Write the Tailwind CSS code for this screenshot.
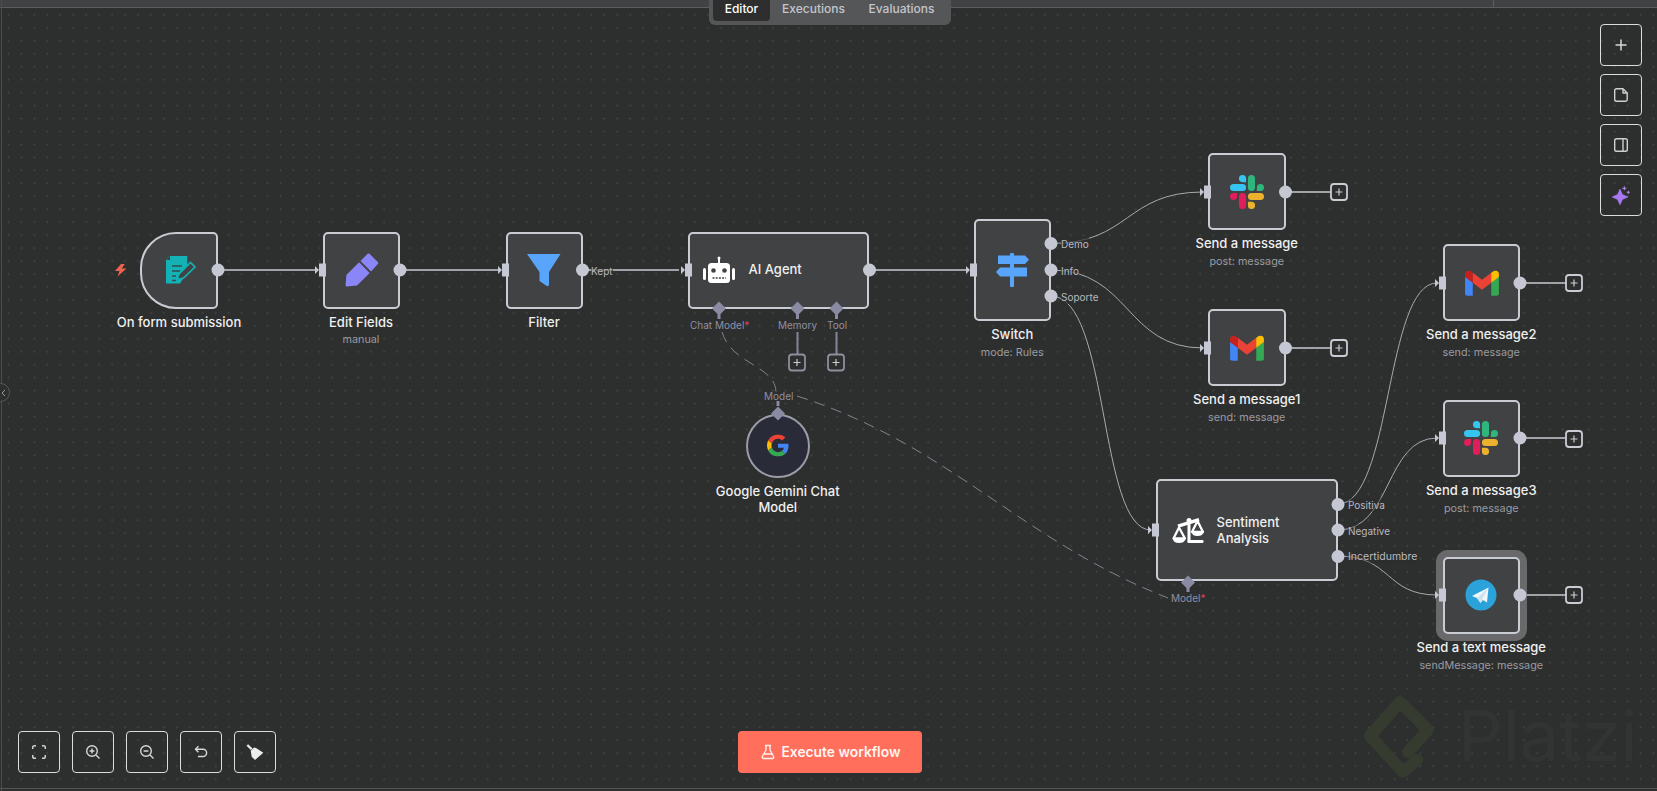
<!DOCTYPE html>
<html><head><meta charset="utf-8"><title>Workflow</title>
<script src="https://cdn.jsdelivr.net/npm/@tailwindcss/browser@4"></script>
</head>
<body class="bg-[#2d2e2e]">
<div class="relative w-[1657px] h-[791px] overflow-hidden bg-[#2d2e2e] [font-family:Inter,sans-serif]">
  <!-- dotted canvas -->
  <div class="absolute inset-0 bg-[radial-gradient(#434444_0.9px,transparent_1.1px)] bg-[size:12.96px_12.96px] bg-[position:2px_-4.5px]"></div>

  <!-- top bar -->
  <div class="relative h-[8px] bg-[#414244] border-b border-b-[#5c5d60] flex"><div class="ml-[1493px] w-px bg-[#5c5d60]"></div></div>

  <!-- page rules -->
  <div class="absolute left-0 right-0 top-[788px] h-px bg-[#55565a]"></div>
  <div class="absolute left-[1px] top-0 bottom-0 w-px bg-[#4c4d50]"></div>

  <!-- watermark -->
  <svg class="absolute left-0 top-0" width="1657" height="791" fill="none"><path d="M1408 752L1428 730L1400 702L1370 736L1403 772L1417 760" stroke="#363b30" stroke-width="12" stroke-linejoin="round" stroke-linecap="round"/></svg>
  <div class="absolute left-[1458px] top-[694px] text-[70px] leading-[84px] font-normal text-[#323333]">Platzi</div>

  <!-- editor tabs -->
  <div class="absolute left-[709px] top-0 w-[242px] h-[25px] bg-[#555658] rounded-b-md flex pl-[4px] text-[12px] leading-[18px] font-medium text-[#c3c5cc]">
    <div class="w-[57px] h-[21px] bg-[#2e2e2e] rounded-b-[4px] text-white text-center">Editor</div>
    <div class="w-[87px] h-[21px] text-center">Executions</div>
    <div class="w-[89px] h-[21px] text-center">Evaluations</div>
  </div>

  <!-- edges -->
  <svg class="absolute left-0 top-0" width="1657" height="791" fill="none">
    <g stroke="#a2a3a8" stroke-width="2">
      <path d="M217 270H317M399 270H500M582 270H679M869 270H968M1285 192H1331M1285 348H1331M1519 283H1566M1519 438H1566M1519 595H1566"/>
    </g>
    <g stroke="#a8a9ae" stroke-width="1">
      <path d="M1051 243.5C1130 243.5 1125 192 1203 192"/>
      <path d="M1051 270C1130 270 1125 348 1203 348"/>
      <path d="M1051 296C1110 296 1098 530 1151 530"/>
      <path d="M1338 504C1392 504 1385 283 1437 283"/>
      <path d="M1338 530C1392 530 1385 438 1437 438"/>
      <path d="M1338 556C1392 556 1385 595 1437 595"/>
    </g>
    <g stroke="#828290" stroke-width="1" stroke-dasharray="11 7">
      <path d="M722 332C732 365 775 365 776 392"/>
      <path d="M797 396C950 445 1020 540 1168 598"/>
    </g>
    <g stroke="#85859a" stroke-width="2"><path d="M797.5 332V354M836.5 332V354"/></g>
  </svg>

  <!-- nodes -->
  <div class="absolute left-[140px] top-[231.5px] w-[78px] h-[77px] rounded-r-[5px] rounded-l-[36px] border-2 border-[#c9ccd3] bg-[#414244]">
    <div class="absolute top-full left-1/2 -translate-x-1/2 mt-[7px] whitespace-nowrap text-center text-[13px] leading-[17px] font-medium text-[#f0f0f0]">On form submission</div>
  </div>
  <div class="absolute left-[322.5px] top-[231.5px] w-[77px] h-[77px] rounded-[5px] border-2 border-[#c9ccd3] bg-[#414244]">
    <div class="absolute top-full left-1/2 -translate-x-1/2 mt-[7px] whitespace-nowrap text-center"><div class="text-[13px] leading-[17px] font-medium text-[#f0f0f0]">Edit Fields</div><div class="mt-[1.5px] text-[10.8px] leading-[16px] text-[#9a9ba1]">manual</div></div>
  </div>
  <div class="absolute left-[505.5px] top-[231.5px] w-[77px] h-[77px] rounded-[5px] border-2 border-[#c9ccd3] bg-[#414244]">
    <div class="absolute top-full left-1/2 -translate-x-1/2 mt-[7px] whitespace-nowrap text-center text-[13px] leading-[17px] font-medium text-[#f0f0f0]">Filter</div>
  </div>
  <div class="absolute left-[687.5px] top-[231.5px] w-[181.5px] h-[77px] rounded-[5px] border-2 border-[#c9ccd3] bg-[#414244] flex items-center pl-[59px] text-[13px] font-medium text-[#f0f0f0]">AI Agent</div>
  <div class="absolute left-[973.5px] top-[218.5px] w-[77.5px] h-[102.5px] rounded-[5px] border-2 border-[#c9ccd3] bg-[#414244]">
    <div class="absolute top-full left-1/2 -translate-x-1/2 mt-[7px] whitespace-nowrap text-center"><div class="text-[13px] leading-[17px] font-medium text-[#f0f0f0]">Switch</div><div class="mt-[1.5px] text-[10.8px] leading-[16px] text-[#9a9ba1]">mode: Rules</div></div>
  </div>
  <div class="absolute left-[1208px] top-[153px] w-[77.5px] h-[77px] rounded-[5px] border-2 border-[#c9ccd3] bg-[#414244]">
    <div class="absolute top-full left-1/2 -translate-x-1/2 mt-[7px] whitespace-nowrap text-center"><div class="text-[13px] leading-[17px] font-medium text-[#f0f0f0]">Send a message</div><div class="mt-[1.5px] text-[10.8px] leading-[16px] text-[#9a9ba1]">post: message</div></div>
  </div>
  <div class="absolute left-[1208px] top-[309px] w-[77.5px] h-[77px] rounded-[5px] border-2 border-[#c9ccd3] bg-[#414244]">
    <div class="absolute top-full left-1/2 -translate-x-1/2 mt-[7px] whitespace-nowrap text-center"><div class="text-[13px] leading-[17px] font-medium text-[#f0f0f0]">Send a message1</div><div class="mt-[1.5px] text-[10.8px] leading-[16px] text-[#9a9ba1]">send: message</div></div>
  </div>
  <div class="absolute left-[1442.5px] top-[244px] w-[77.5px] h-[77px] rounded-[5px] border-2 border-[#c9ccd3] bg-[#414244]">
    <div class="absolute top-full left-1/2 -translate-x-1/2 mt-[7px] whitespace-nowrap text-center"><div class="text-[13px] leading-[17px] font-medium text-[#f0f0f0]">Send a message2</div><div class="mt-[1.5px] text-[10.8px] leading-[16px] text-[#9a9ba1]">send: message</div></div>
  </div>
  <div class="absolute left-[1442.5px] top-[400px] w-[77.5px] h-[77px] rounded-[5px] border-2 border-[#c9ccd3] bg-[#414244]">
    <div class="absolute top-full left-1/2 -translate-x-1/2 mt-[7px] whitespace-nowrap text-center"><div class="text-[13px] leading-[17px] font-medium text-[#f0f0f0]">Send a message3</div><div class="mt-[1.5px] text-[10.8px] leading-[16px] text-[#9a9ba1]">post: message</div></div>
  </div>
  <div class="absolute left-[1442.5px] top-[557px] w-[77.5px] h-[77px] rounded-[5px] border-2 border-[#c9ccd3] bg-[#414244] shadow-[0_0_0_7px_#69696b]">
    <div class="absolute top-full left-1/2 -translate-x-1/2 mt-[7px] whitespace-nowrap text-center"><div class="text-[13px] leading-[17px] font-medium text-[#f0f0f0]">Send a text message</div><div class="mt-[1.5px] text-[10.8px] leading-[16px] text-[#9a9ba1]">sendMessage: message</div></div>
  </div>
  <div class="absolute left-[1155.5px] top-[478.5px] w-[182.5px] h-[102.5px] rounded-[5px] border-2 border-[#c9ccd3] bg-[#414244] flex items-center pl-[59px] text-[13px] leading-[16px] font-medium text-[#f0f0f0]">Sentiment<br>Analysis</div>
  <div class="absolute left-[745.5px] top-[413.5px] w-[64.5px] h-[64.5px] rounded-full border-2 border-[#9b9ca6] bg-[#2a2b38]">
    <div class="absolute top-full left-1/2 -translate-x-1/2 mt-[7px] w-[150px] text-center text-[13px] leading-[16px] font-medium text-[#f0f0f0]">Google Gemini Chat Model</div>
  </div>

  <!-- port labels -->
  <div class="absolute left-[591px] top-[263.5px] text-[10px] leading-[14px] text-[#b8b9c0] bg-[#2d2e2e]/70">Kept</div>
  <div class="absolute left-[1061px] top-[237px] text-[10px] leading-[14px] text-[#b8b9c0] bg-[#2d2e2e]/70">Demo</div>
  <div class="absolute left-[1061px] top-[263.5px] text-[10px] leading-[14px] text-[#b8b9c0] bg-[#2d2e2e]/70">Info</div>
  <div class="absolute left-[1061px] top-[289.5px] text-[10px] leading-[14px] text-[#b8b9c0] bg-[#2d2e2e]/70">Soporte</div>
  <div class="absolute left-[1348px] top-[497.5px] text-[10px] leading-[14px] text-[#b8b9c0] bg-[#2d2e2e]/40">Positiva</div>
  <div class="absolute left-[1348px] top-[523.5px] text-[10px] leading-[14px] text-[#b8b9c0] bg-[#2d2e2e]/40">Negative</div>
  <div class="absolute left-[1348px] top-[549.5px] text-[10.5px] leading-[14px] text-[#b8b9c0] bg-[#2d2e2e]/40">Incertidumbre</div>
  <div class="absolute left-[690px] top-[317.5px] text-[10px] leading-[14px] text-[#8f8fa3]">Chat Model<span class="text-[#e0405a]">*</span></div>
  <div class="absolute left-[778px] top-[317.5px] text-[10px] leading-[14px] text-[#8f8fa3]">Memory</div>
  <div class="absolute left-[827px] top-[317.5px] text-[10px] leading-[14px] text-[#8f8fa3]">Tool</div>
  <div class="absolute left-[764px] top-[388.5px] text-[10px] leading-[14px] text-[#8f8fa3]">Model</div>
  <div class="absolute left-[1171px] top-[590.5px] text-[10px] leading-[14px] text-[#8f8fa3]">Model<span class="text-[#e0405a]">*</span></div>

  <!-- ports and icons -->
  <svg class="absolute left-0 top-0" width="1657" height="791" fill="none">
    <g fill="#c5c8d3">
      <circle cx="218" cy="270" r="6.5"/><circle cx="400" cy="270" r="6.5"/><circle cx="582.5" cy="270" r="6.5"/><circle cx="869.5" cy="270" r="6.5"/>
      <circle cx="1051" cy="243.5" r="6.5"/><circle cx="1051" cy="270" r="6.5"/><circle cx="1051" cy="296" r="6.5"/>
      <circle cx="1285.5" cy="192" r="6.5"/><circle cx="1285.5" cy="348" r="6.5"/><circle cx="1520" cy="283" r="6.5"/><circle cx="1520" cy="438" r="6.5"/><circle cx="1520" cy="595" r="6.5"/>
      <circle cx="1338" cy="504.5" r="6.5"/><circle cx="1338" cy="530" r="6.5"/><circle cx="1338" cy="556.5" r="6.5"/>
      <rect x="319" y="263.5" width="7" height="13"/><rect x="502" y="263.5" width="7" height="13"/><rect x="685" y="263.5" width="7" height="13"/><rect x="970" y="263.5" width="7" height="13"/>
      <rect x="1204" y="185.5" width="7" height="13"/><rect x="1204" y="341.5" width="7" height="13"/><rect x="1439" y="276.5" width="7" height="13"/><rect x="1439" y="431.5" width="7" height="13"/><rect x="1439" y="588.5" width="7" height="13"/><rect x="1152" y="523.5" width="7" height="13"/>
      <path d="M315 266l4 4-4 4zM498 266l4 4-4 4zM681 266l4 4-4 4zM966 266l4 4-4 4zM1200 188l4 4-4 4zM1200 344l4 4-4 4zM1435 279l4 4-4 4zM1435 434l4 4-4 4zM1435 591l4 4-4 4zM1148 526l4 4-4 4z"/>
    </g>
    <g fill="#8a8aa3">
      <path d="M719 301.5l7 7-7 7-7-7zM797.5 301.5l7 7-7 7-7-7zM836.5 301.5l7 7-7 7-7-7zM778 406.5l7 7-7 7-7-7zM1188 575.5l7 7-7 7-7-7z"/>
      <path d="M717.5 314h3v5h-3zM796 314h3v5h-3zM835 314h3v5h-3zM776.500 401h3v5h-3zM1186.500 588h3v4h-3z"/>
    </g>
    <!-- add buttons -->
    <g stroke="#c9ccd3" stroke-width="1.8">
      <rect x="1331" y="184" width="16" height="16" rx="3" fill="#2d2e2e"/><path d="M1339 188.500v7M1335.500 192h7" stroke-width="1.2"/>
      <rect x="1331" y="340" width="16" height="16" rx="3" fill="#2d2e2e"/><path d="M1339 344.500v7M1335.500 348h7" stroke-width="1.2"/>
      <rect x="1566" y="275" width="16" height="16" rx="3" fill="#2d2e2e"/><path d="M1574 279.500v7M1570.500 283h7" stroke-width="1.2"/>
      <rect x="1566" y="431" width="16" height="16" rx="3" fill="#2d2e2e"/><path d="M1574 435.500v7M1570.500 439h7" stroke-width="1.2"/>
      <rect x="1566" y="587" width="16" height="16" rx="3" fill="#2d2e2e"/><path d="M1574 591.500v7M1570.500 595h7" stroke-width="1.2"/>
    </g>
    <g stroke="#8e8e9c" stroke-width="1.8">
      <rect x="789" y="354.500" width="16" height="16" rx="3" fill="#2d2e2e"/><path d="M797 359v7M793.500 362.500h7" stroke="#c9ccd3" stroke-width="1.2"/>
      <rect x="828" y="354.500" width="16" height="16" rx="3" fill="#2d2e2e"/><path d="M836 359v7M832.500 362.500h7" stroke="#c9ccd3" stroke-width="1.2"/>
    </g>
    <!-- bolt -->
    <path d="M121 264L115 271H119.500L117.500 276.500L126.500 268.500H121.800L124.800 264Z" fill="#ee6350"/>
    <!-- form icon -->
    <path d="M170 256H187.300V272L180 283.500H166V260Z" fill="#14b1b5"/>
    <path d="M166 260L170 256V260Z" fill="#414244"/>
    <path d="M172 266H182M172 271H180M172 276H176M172 280.500H176" stroke="#2c4f52" stroke-width="1.3"/>
    <path d="M177 279.500L179 274L190.500 262.500L195 267L183.500 278Z" fill="#414244" stroke="#14b1b5" stroke-width="1.700"/>
    <!-- pencil -->
    <path d="M346.400 275L359.100 262.300L369.700 272.900L357 285.600Q351 286.200 347 286.500Q345.500 286.500 345.600 285Z" fill="#8b86f7"/>
    <path d="M360.500 260.900L367.600 253.800Q368.500 253 369.500 253.800L377.800 262Q378.600 263 377.800 264L371.100 271.500Z" fill="#8b86f7"/>
    <!-- funnel -->
    <path d="M527 254H560.500L549 272V284Q549 287.500 546 285.500L539.500 281V272Z" fill="#58a5fb"/>
    <!-- robot -->
    <g fill="#fff">
      <rect x="708" y="263" width="22" height="20" rx="3.500"/><rect x="718" y="257" width="2" height="6"/><circle cx="719" cy="258" r="1.500"/>
      <rect x="703" y="268" width="3" height="12" rx="1.500"/><rect x="732" y="268" width="3" height="12" rx="1.500"/>
    </g>
    <circle cx="713.500" cy="270.500" r="2.300" fill="#414244"/><circle cx="724.500" cy="270.500" r="2.300" fill="#414244"/>
    <path d="M712.500 278H726" stroke="#414244" stroke-width="1.600" stroke-dasharray="2 1.200"/>
    <!-- signpost -->
    <g fill="#58a5fb">
      <rect x="1010" y="253" width="4" height="34" rx="1"/>
      <path d="M998 255.500H1025L1029 259.700L1025 264H998Z"/>
      <path d="M1000 267.500H1027V276.500H1000L996 272Z"/>
    </g>
    <!-- slack -->
    <svg x="1230" y="175" width="34" height="34" viewBox="0 0 24 24"><use href="#slack"/></svg>
    <svg x="1464" y="421" width="34" height="34" viewBox="0 0 24 24"><use href="#slack"/></svg>
    <defs><g id="slack">
      <path fill="#E01E5A" d="M5.042 15.165a2.528 2.528 0 0 1-2.52 2.523A2.528 2.528 0 0 1 0 15.165a2.527 2.527 0 0 1 2.522-2.52h2.52v2.52zM6.313 15.165a2.527 2.527 0 0 1 2.521-2.52 2.527 2.527 0 0 1 2.521 2.52v6.313A2.528 2.528 0 0 1 8.834 24a2.528 2.528 0 0 1-2.521-2.522v-6.313z"/>
      <path fill="#36C5F0" d="M8.834 5.042a2.528 2.528 0 0 1-2.521-2.52A2.528 2.528 0 0 1 8.834 0a2.528 2.528 0 0 1 2.521 2.522v2.52H8.834zM8.834 6.313a2.528 2.528 0 0 1 2.521 2.521 2.528 2.528 0 0 1-2.521 2.521H2.522A2.528 2.528 0 0 1 0 8.834a2.528 2.528 0 0 1 2.522-2.521h6.312z"/>
      <path fill="#2EB67D" d="M18.956 8.834a2.528 2.528 0 0 1 2.522-2.521A2.528 2.528 0 0 1 24 8.834a2.528 2.528 0 0 1-2.522 2.521h-2.522V8.834zM17.688 8.834a2.528 2.528 0 0 1-2.523 2.521 2.527 2.527 0 0 1-2.52-2.521V2.522A2.527 2.527 0 0 1 15.165 0a2.528 2.528 0 0 1 2.523 2.522v6.312z"/>
      <path fill="#ECB22E" d="M15.165 18.956a2.528 2.528 0 0 1 2.523 2.522A2.528 2.528 0 0 1 15.165 24a2.527 2.527 0 0 1-2.52-2.522v-2.522h2.52zM15.165 17.688a2.527 2.527 0 0 1-2.52-2.523 2.526 2.526 0 0 1 2.52-2.52h6.313A2.527 2.527 0 0 1 24 15.165a2.528 2.528 0 0 1-2.522 2.523h-6.313z"/>
    </g>
    <g id="gmail">
      <path fill="#4285F4" d="M58.182 192.05V93.14L27.507 65.077 0 49.504v125.091c0 9.658 7.825 17.455 17.455 17.455h40.727Z"/>
      <path fill="#34A853" d="M197.818 192.05h40.727c9.659 0 17.455-7.826 17.455-17.455V49.505l-31.156 17.837-27.026 25.798v98.91Z"/>
      <path fill="#EA4335" d="M58.182 93.14l-4.174-38.647 4.174-36.989L128 69.868l69.818-52.364 4.669 34.992-4.669 40.644L128 145.504z"/>
      <path fill="#FBBC04" d="M197.818 17.504V93.14L256 49.504V26.231c0-21.585-24.64-33.89-41.89-20.945l-16.292 12.218Z"/>
      <path fill="#C5221F" d="M0 49.504l26.759 20.07L58.182 93.14V17.504L41.89 5.286C24.61-7.66 0 4.646 0 26.23v23.273Z"/>
    </g></defs>
    <svg x="1230" y="335.500" width="34" height="25.500" viewBox="0 0 256 193"><use href="#gmail"/></svg>
    <svg x="1465" y="270.500" width="34" height="25.500" viewBox="0 0 256 193"><use href="#gmail"/></svg>
    <!-- telegram -->
    <circle cx="1481" cy="595" r="15.500" fill="#2ba3da"/>
    <path d="M1488.500 587.500L1472 596L1477 598L1480.500 603L1483 600L1487 602.500Z" fill="#f2f7fa"/>
    <path d="M1477 598L1488.500 587.500L1480.500 603Z" fill="#cfe3ee"/>
    <!-- scale -->
    <g fill="#fff">
      <rect x="1187.500" y="519" width="3" height="23"/><rect x="1187.500" y="540" width="16" height="3" rx="1"/>
      <path d="M1177.500 524.500L1198.500 518L1199.500 521.300L1178.500 527.800Z"/>
      <circle cx="1189" cy="520.500" r="2.500"/>
    </g>
    <path d="M1179 527.500L1173.500 538.500H1185L1179 527.500ZM1197.500 521L1192 532H1203L1197.500 521Z" stroke="#fff" stroke-width="2.300" stroke-linejoin="round"/>
    <path d="M1172.800 538.500Q1173.500 543 1179 543Q1184.800 543 1185.500 538.500ZM1191.500 531.500Q1192 536 1197.500 536Q1203 536 1203.800 531.500Z" fill="#fff"/>
    <!-- google -->
    <svg x="767" y="434.500" width="22" height="22" viewBox="0 0 48 48">
      <path fill="#EA4335" d="M24 9.5c3.54 0 6.71 1.22 9.21 3.6l6.85-6.85C35.9 2.38 30.47 0 24 0 14.62 0 6.51 5.38 2.56 13.22l7.98 6.19C12.43 13.72 17.74 9.5 24 9.5z"/>
      <path fill="#4285F4" d="M46.98 24.55c0-1.57-.15-3.09-.38-4.55H24v9.02h12.94c-.58 2.96-2.26 5.48-4.78 7.18l7.73 6c4.51-4.18 7.09-10.36 7.09-17.65z"/>
      <path fill="#FBBC05" d="M10.53 28.59c-.48-1.45-.76-2.99-.76-4.59s.27-3.14.76-4.59l-7.98-6.19C.92 16.46 0 20.12 0 24c0 3.88.92 7.54 2.56 10.78l7.97-6.19z"/>
      <path fill="#34A853" d="M24 48c6.48 0 11.93-2.13 15.89-5.81l-7.73-6c-2.15 1.45-4.92 2.3-8.16 2.3-6.26 0-11.57-4.22-13.47-9.91l-7.98 6.19C6.51 42.62 14.62 48 24 48z"/>
    </svg>
  </svg>

  <!-- collapse handle -->
  <div class="absolute left-[-9px] top-[383px] w-[19px] h-[19px] rounded-full border border-[#55565a] bg-[#2d2e2e] flex items-center justify-end pr-px">
    <svg width="8" height="8" viewBox="0 0 8 8" fill="none"><path d="M5 1L2 4L5 7" stroke="#9a9ba1" stroke-width="1"/></svg>
  </div>

  <!-- right toolbar -->
  <div class="absolute left-[1600px] top-[24px] flex flex-col gap-[8px]">
    <button class="w-[42px] h-[42px] rounded-[4px] border border-[#dcdcdc] flex items-center justify-center">
      <svg width="16" height="16" viewBox="0 0 16 16" fill="none" stroke="#d8d8d8" stroke-width="1.500"><path d="M8 2.500v11M2.500 8h11"/></svg>
    </button>
    <button class="w-[42px] h-[42px] rounded-[4px] border border-[#dcdcdc] flex items-center justify-center">
      <svg width="16" height="16" viewBox="0 0 16 16" fill="none" stroke="#cfcfcf" stroke-width="1.400" stroke-linejoin="round"><path d="M3.500 1.800H10L14.200 6V12.500A1.800 1.800 0 0 1 12.400 14.300H3.500A1.800 1.800 0 0 1 1.700 12.500V3.600A1.800 1.800 0 0 1 3.500 1.800ZM10 1.800V6H14.200"/></svg>
    </button>
    <button class="w-[42px] h-[42px] rounded-[4px] border border-[#dcdcdc] flex items-center justify-center">
      <svg width="16" height="16" viewBox="0 0 16 16" fill="none" stroke="#cfcfcf" stroke-width="1.400"><rect x="1.700" y="1.800" width="12.600" height="12.500" rx="1.800"/><path d="M10 1.800v12.500"/></svg>
    </button>
    <button class="w-[42px] h-[42px] rounded-[4px] border border-[#dcdcdc] flex items-center justify-center">
      <svg width="20" height="20" viewBox="0 0 20 20" fill="none"><path d="M9 4L11.500 9.500L17 12L11.500 14.500L9 20L6.500 14.500L1 12L6.500 9.500Z" fill="#a879f0" stroke="#a879f0" stroke-width="0.500" stroke-linejoin="round"/><path d="M13.300 1.300v4M11.300 3.300h4M17.300 5.800v3M15.800 7.300h3" stroke="#b795ee" stroke-width="1"/></svg>
    </button>
  </div>

  <!-- bottom-left toolbar -->
  <div class="absolute left-[18px] top-[731px] flex gap-[12px]">
    <button class="w-[42px] h-[42px] rounded-[4px] border border-[#dcdcdc] flex items-center justify-center">
      <svg width="16" height="16" viewBox="0 0 16 16" fill="none" stroke="#cfcfcf" stroke-width="1.500"><path d="M1.700 5V3.500A1.800 1.800 0 0 1 3.500 1.700H5M11 1.700H12.500A1.800 1.800 0 0 1 14.300 3.500V5M14.300 11V12.500A1.800 1.800 0 0 1 12.500 14.300H11M5 14.300H3.500A1.800 1.800 0 0 1 1.700 12.500V11"/></svg>
    </button>
    <button class="w-[42px] h-[42px] rounded-[4px] border border-[#dcdcdc] flex items-center justify-center">
      <svg width="16" height="16" viewBox="0 0 16 16" fill="none" stroke="#d8d8d8" stroke-width="1.400"><circle cx="7" cy="7" r="5.300"/><path d="M11 11L14.500 14.500M7 4.600v4.800M4.600 7h4.800"/></svg>
    </button>
    <button class="w-[42px] h-[42px] rounded-[4px] border border-[#dcdcdc] flex items-center justify-center">
      <svg width="16" height="16" viewBox="0 0 16 16" fill="none" stroke="#d8d8d8" stroke-width="1.400"><circle cx="7" cy="7" r="5.300"/><path d="M11 11L14.500 14.500M4.600 7h4.800"/></svg>
    </button>
    <button class="w-[42px] h-[42px] rounded-[4px] border border-[#dcdcdc] flex items-center justify-center">
      <svg width="16" height="16" viewBox="0 0 16 16" fill="none" stroke="#d8d8d8" stroke-width="1.400" stroke-linejoin="round"><path d="M5.500 2.200L2.500 5.200L5.500 8.200"/><path d="M2.500 5.200H10A3.500 3.500 0 0 1 10 12.500H5"/></svg>
    </button>
    <button class="w-[42px] h-[42px] rounded-[4px] border border-[#dcdcdc] flex items-center justify-center">
      <svg width="18" height="18" viewBox="0 0 18 18" fill="#ececec"><path d="M1.300 2L5.700 6.300" stroke="#ececec" stroke-width="2.300"/><path d="M4.700 7.700L8 4.600L10 5L17.300 9.700L9 17L5.700 13.700Z"/></svg>
    </button>
  </div>

  <!-- execute -->
  <div class="absolute left-[738px] top-[731px]">
    <button class="w-[184px] h-[42px] rounded-[4px] bg-[#ff6f5c] flex items-center justify-center gap-[6px] text-[13.8px] font-semibold text-[#fff4f2]">
      <svg width="16" height="16" viewBox="0 0 16 16" fill="none" stroke="#fff4f2" stroke-width="1.300" stroke-linejoin="round"><path d="M5 1.500H11M6 1.500V6L2.300 12.800A1.200 1.200 0 0 0 3.400 14.500H12.600A1.200 1.200 0 0 0 13.700 12.800L10 6V1.500M4.300 10H11.700"/></svg>
      Execute workflow
    </button>
  </div>
</div>
</body></html>
